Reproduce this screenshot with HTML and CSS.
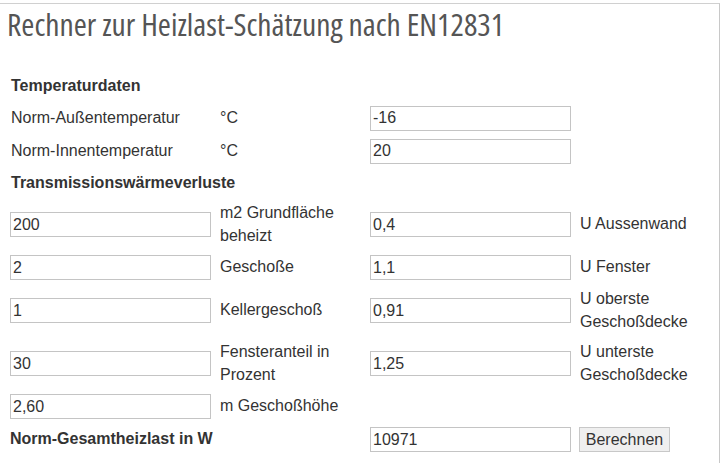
FILE: index.html
```html
<!DOCTYPE html>
<html lang="de">
  <head>
    <meta charset="UTF-8" />
    <meta name="viewport" content="width=device-width, initial-scale=1.0" />
    <title>Heizlast-Rechner</title>
    <link rel="stylesheet" href="styles.css">
  </head>
  <body>
    <div class="page">
      <h1 class="title">Rechner zur Heizlast-Schätzung nach EN12831</h1>
      <form class="calc">
        <div class="head">Temperaturdaten</div>

        <div class="label">Norm-Außentemperatur</div>
        <div class="label">°C</div>
        <input class="field" type="text" value="-16">
        <div></div>

        <div class="label">Norm-Innentemperatur</div>
        <div class="label">°C</div>
        <input class="field" type="text" value="20">
        <div></div>

        <div class="head">Transmissionswärmeverluste</div>

        <input class="field" type="text" value="200">
        <div class="label">m2 Grundfläche beheizt</div>
        <input class="field" type="text" value="0,4">
        <div class="label">U Aussenwand</div>

        <input class="field" type="text" value="2">
        <div class="label">Geschoße</div>
        <input class="field" type="text" value="1,1">
        <div class="label">U Fenster</div>

        <input class="field" type="text" value="1">
        <div class="label">Kellergeschoß</div>
        <input class="field" type="text" value="0,91">
        <div class="label">U oberste Geschoßdecke</div>

        <input class="field" type="text" value="30">
        <div class="label">Fensteranteil in Prozent</div>
        <input class="field" type="text" value="1,25">
        <div class="label">U unterste Geschoßdecke</div>

        <input class="field" type="text" value="2,60">
        <div class="label">m Geschoßhöhe</div>
        <div></div>
        <div></div>

        <div class="total">Norm-Gesamtheizlast in W</div>
        <input class="field" type="text" value="10971">
        <div><button class="btn" type="button">Berechnen</button></div>
      </form>
    </div>
  </body>
</html>
```

FILE: styles.css
```css
* {
  margin: 0;
  padding: 0;
  box-sizing: border-box;
}
body {
  background: #fff;
  font-family: "Liberation Sans", Arial, sans-serif;
  color: #333;
}
.page {
  width: 720px;
  min-height: 470px;
  margin-top: 3px;
  border-top: 1px solid #d0d0d0;
  border-right: 1px solid #c8c8c8;
}
.title {
  font-family: "Open Sans", sans-serif;
  font-stretch: 75%;
  font-weight: 400;
  font-size: 31.6px;
  line-height: 40px;
  color: #555;
  padding-left: 7px;
}
.calc {
  display: grid;
  grid-template-columns: 201px 143px 201px 132px;
  column-gap: 8px;
  row-gap: 8px;
  align-items: center;
  padding: 31px 0 0 10px;
  font-size: 16px;
  line-height: 22.5px;
}
.head {
  grid-column: 1 / -1;
  font-weight: 700;
  padding-left: 1px;
}
.total {
  grid-column: 1 / 3;
  font-weight: 700;
}
.label {
  padding-left: 1px;
}
.field {
  height: 25px;
  width: 201px;
  border: 1px solid #c4c4c4;
  padding: 0 2px;
  font-family: "Liberation Sans", Arial, sans-serif;
  font-size: 16px;
  color: #333;
  background: #fff;
}
.btn {
  height: 25px;
  width: 91px;
  border: 1px solid #c8c8c8;
  background: #efefef;
  font-family: "Liberation Sans", Arial, sans-serif;
  font-size: 16px;
  color: #333;
}
```
